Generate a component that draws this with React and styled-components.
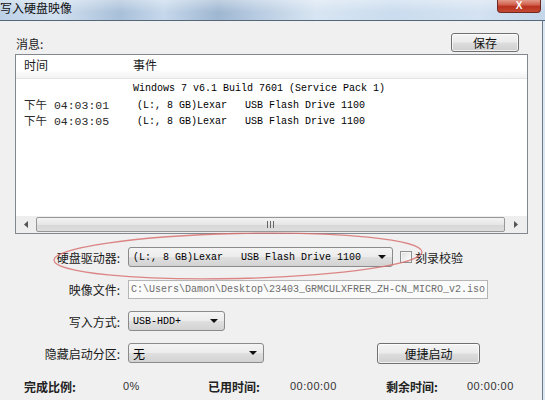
import React from 'react';
import styled, { createGlobalStyle } from 'styled-components';

const cjk = '"Noto Sans CJK SC", "Liberation Sans", sans-serif';
const mono = '"Liberation Mono", "Noto Sans CJK SC", monospace';

const GlobalStyle = createGlobalStyle`
body {
    margin: 0;
    background: #f0f0f0;
    overflow: hidden;
}
`;

const messages = [
    { time: '', text: 'Windows 7 v6.1 Build 7601 (Service Pack 1)', indent: 0 },
    { time: '04:03:01', text: '(L:, 8 GB)Lexar   USB Flash Drive 1100', indent: 4 },
    { time: '04:03:05', text: '(L:, 8 GB)Lexar   USB Flash Drive 1100', indent: 4 },
];

const App = () => {
    return (
        <Window>
            <GlobalStyle />
            <TitleBar>
                <Title>写入硬盘映像</Title>
                <CloseButton>X</CloseButton>
            </TitleBar>
            <Main>
                <Content>
                    <TopRow>
                        <Caption>消息:</Caption>
                        <Button $width={68}>保存</Button>
                    </TopRow>
                    <ListBox>
                        <ListHead>
                            <TimeCol>时间</TimeCol>
                            <span>事件</span>
                        </ListHead>
                        <ListBody>
                            {messages.map((m, i) => (
                                <ListRow key={i}>
                                    <TimeCol $mono>
                                        {m.time && `下午 ${m.time}`}
                                    </TimeCol>
                                    <Event style={{ paddingLeft: m.indent }}>{m.text}</Event>
                                </ListRow>
                            ))}
                        </ListBody>
                        <HScroll>
                            <Arrow>
                                <svg width="4" height="7" viewBox="0 0 4 7"><path d="M4 0 L0 3.5 L4 7 Z" fill="#555" /></svg>
                            </Arrow>
                            <Thumb>
                                <svg width="7" height="7" viewBox="0 0 7 7">
                                    <path d="M0.5 0 V7 M3.5 0 V7 M6.5 0 V7" stroke="#666" strokeWidth="1" />
                                </svg>
                            </Thumb>
                            <Arrow $wide>
                                <svg width="4" height="7" viewBox="0 0 4 7"><path d="M0 0 L4 3.5 L0 7 Z" fill="#555" /></svg>
                            </Arrow>
                        </HScroll>
                    </ListBox>
                    <Form>
                        <Row>
                            <Label>硬盘驱动器:</Label>
                            <Combo $width={265}>
                                <ComboText>(L:, 8 GB)Lexar   USB Flash Drive 1100</ComboText>
                                <DropArrow />
                            </Combo>
                            <Check />
                            <CheckLabel>刻录校验</CheckLabel>
                        </Row>
                        <Row>
                            <Label>映像文件:</Label>
                            <PathInput>C:\Users\Damon\Desktop\23403_GRMCULXFRER_ZH-CN_MICRO_v2.iso</PathInput>
                        </Row>
                        <Row>
                            <Label>写入方式:</Label>
                            <Combo $width={97}>
                                <ComboText>USB-HDD+</ComboText>
                                <DropArrow />
                            </Combo>
                        </Row>
                        <Row>
                            <Label>隐藏启动分区:</Label>
                            <Combo $width={136}>
                                <ComboText $cjk>无</ComboText>
                                <DropArrow />
                            </Combo>
                            <Button $width={103} $height={21} $left={113}>便捷启动</Button>
                        </Row>
                        <Status>
                            <StatusLabel>完成比例:</StatusLabel>
                            <StatusValue>0%</StatusValue>
                            <StatusLabel>已用时间:</StatusLabel>
                            <StatusValue>00:00:00</StatusValue>
                            <StatusLabel>剩余时间:</StatusLabel>
                            <StatusValue>00:00:00</StatusValue>
                        </Status>
                    </Form>
                </Content>
                <Frame />
            </Main>
            <Mark width="380" height="58" viewBox="0 0 380 58">
                <ellipse cx="190" cy="28" rx="184" ry="22.5" transform="rotate(-1.3 190 28)"
                    fill="none" stroke="#d77272" strokeWidth="1.3" opacity="0.85" />
            </Mark>
        </Window>
    );
};

export default App;


const Window = styled.div`
position: relative;
width: 545px;
height: 400px;
overflow: hidden;
display: flex;
flex-direction: column;
background: #f0f0f0;
font-family: ${cjk};
font-size: 12px;
color: #1a1a1a;
`;
const TitleBar = styled.div`
height: 20px;
flex-shrink: 0;
display: flex;
align-items: flex-start;
justify-content: space-between;
padding-right: 4px;
border-bottom: 1px solid #55677a;
background:
    linear-gradient(180deg, rgba(255,255,255,0.35) 0%, rgba(255,255,255,0) 60%),
    linear-gradient(90deg, #bcd0e6 0%, #d2e1f0 10%, #a9c0d9 22%, #c6d8eb 30%, #9fb7d1 40%,
        #b7cbe1 47%, #d8e5f2 58%, #cadcee 72%, #d4e2f1 88%, #c3d6ea 100%);
`;
const Title = styled.div`
font-size: 12px;
line-height: 16px;
color: #111;
`;
const CloseButton = styled.div`
width: 44px;
height: 13px;
box-sizing: border-box;
border: 1px solid #6e2a20;
border-top: none;
border-radius: 0 0 4px 4px;
background: linear-gradient(180deg, #e49a8a 0%, #d0604c 40%, #b8321f 55%, #c54a33 100%);
color: #fff;
font-family: "Liberation Sans", sans-serif;
font-weight: 700;
font-size: 10px;
line-height: 12px;
text-align: center;
`;
const Main = styled.div`
flex: 1;
display: flex;
`;
const Content = styled.div`
flex: 1;
padding: 12px 14px 0 15px;
`;
const Frame = styled.div`
width: 2px;
border-left: 1px solid #6b7b8c;
background: #dce7f2;
`;
const TopRow = styled.div`
height: 21px;
display: flex;
justify-content: space-between;
align-items: flex-start;
padding-right: 9px;
`;
const Caption = styled.div`
padding-top: 3px;
padding-left: 1px;
line-height: 16px;
`;
const Button = styled.div`
width: ${p => p.$width}px;
height: ${p => p.$height || 19}px;
margin-left: ${p => p.$left || 0}px;
box-sizing: border-box;
border: 1px solid #707070;
border-radius: 3px;
background: linear-gradient(180deg, #f4f4f4 0%, #ebebeb 48%, #dddddd 52%, #cfcfcf 100%);
box-shadow: inset 0 0 0 1px rgba(255,255,255,0.7);
display: flex;
align-items: center;
justify-content: center;
font-size: 12px;
color: #111;
`;
const ListBox = styled.div`
height: 180px;
box-sizing: border-box;
border: 1px solid #828790;
background: #fff;
display: flex;
flex-direction: column;
`;
const ListHead = styled.div`
height: 24px;
box-sizing: border-box;
padding-bottom: 4px;
display: flex;
align-items: center;
border-bottom: 1px solid #e5e5e5;
background: linear-gradient(180deg, #ffffff 0%, #ffffff 65%, #f2f2f2 100%);
`;
const TimeCol = styled.div`
width: 109px;
padding-left: 8px;
flex-shrink: 0;
white-space: pre;
font-family: ${p => p.$mono ? mono : cjk};
font-size: ${p => p.$mono ? 11.5 : 12}px;
color: ${p => p.$mono ? '#2a2a2a' : '#1a1a1a'};
`;
const ListBody = styled.div`
flex: 1;
padding-top: 2px;
`;
const ListRow = styled.div`
height: 16.5px;
display: flex;
align-items: center;
line-height: 16px;
`;
const Event = styled.span`
font-family: ${mono};
font-size: 10px;
white-space: pre;
color: #000;
`;
const HScroll = styled.div`
height: 17px;
display: flex;
align-items: stretch;
background: #eeeeee;
padding: 1px 0;
box-sizing: border-box;
`;
const Arrow = styled.div`
width: ${p => p.$wide ? 22 : 20}px;
display: flex;
align-items: center;
justify-content: center;
`;
const Thumb = styled.div`
flex: 1;
box-sizing: border-box;
border: 1px solid #979797;
border-radius: 2px;
background: linear-gradient(180deg, #f3f3f3 0%, #e6e6e6 50%, #d6d6d6 51%, #dedede 100%);
display: flex;
align-items: center;
justify-content: center;
`;
const Form = styled.div`
padding-top: 7px;
`;
const Row = styled.div`
height: 32px;
display: flex;
align-items: center;
`;
const Label = styled.div`
width: 105px;
margin-right: 8px;
text-align: right;
white-space: nowrap;
`;
const Combo = styled.div`
position: relative;
width: ${p => p.$width}px;
height: 20px;
box-sizing: border-box;
border: 1px solid #8a8a8a;
border-radius: 3px;
background: linear-gradient(180deg, #f4f4f4 0%, #ececec 48%, #dfdfdf 52%, #d3d3d3 100%);
display: flex;
align-items: center;
padding-left: 4px;
`;
const ComboText = styled.span`
font-family: ${p => p.$cjk ? cjk : mono};
font-size: ${p => p.$cjk ? 12 : 10}px;
white-space: pre;
color: #000;
`;
const DropArrow = styled.span`
position: absolute;
right: 6px;
top: 7px;
border-left: 4px solid transparent;
border-right: 4px solid transparent;
border-top: 4px solid #111;
`;
const Check = styled.div`
width: 12px;
height: 12px;
box-sizing: border-box;
margin-left: 7px;
border: 1px solid #8e8f8f;
background: linear-gradient(135deg, #dcdcdc 0%, #f6f6f6 70%, #ffffff 100%);
box-shadow: inset 0 0 0 1px #f4f4f4;
`;
const CheckLabel = styled.span`
margin-left: 3px;
font-size: 12px;
`;
const PathInput = styled.div`
width: 360px;
height: 19px;
box-sizing: border-box;
border: 1px solid #b5b5b5;
background: #fbfbfb;
display: flex;
align-items: center;
padding-left: 2px;
font-family: ${mono};
font-size: 10px;
color: #6d6d6d;
white-space: pre;
`;
const Status = styled.div`
height: 34px;
display: grid;
grid-template-columns: 99px 85px 82px 96px 81px auto;
align-items: center;
padding-left: 9px;
`;
const StatusLabel = styled.span`
font-weight: 600;
font-size: 12px;
color: #222;
`;
const StatusValue = styled.span`
font-family: "Liberation Sans", sans-serif;
font-size: 11px;
letter-spacing: 0.5px;
color: #333;
`;
const Mark = styled.svg`
position: absolute;
left: 48px;
top: 228px;
pointer-events: none;
`;
